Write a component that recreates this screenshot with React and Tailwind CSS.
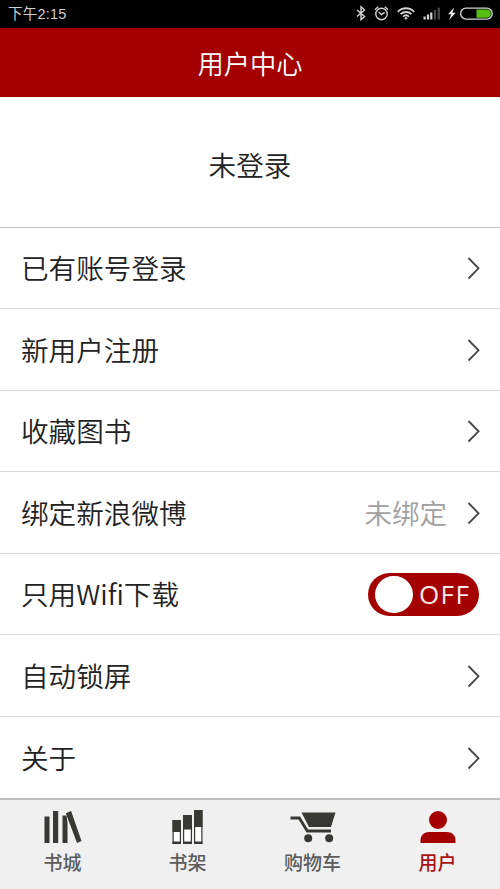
const RED = '#a40000'
const DARK = '#383834'

const rows = [
  { label: '已有账号登录' },
  { label: '新用户注册' },
  { label: '收藏图书' },
  { label: '绑定新浪微博', value: '未绑定' },
  { label: '只用Wifi下载', toggle: true },
  { label: '自动锁屏' },
  { label: '关于' },
]

function StatusIcons() {
  return (
    <svg width="145" height="28" viewBox="-5 0.5 145 28" fill="none" stroke="#d4d4d4" strokeWidth="1.4">
      {/* bluetooth */}
      <path d="M-3 10.5l7.500 6.500-3.500 3.200V7.300l3.500 3.200-7.500 6.500" />
      {/* alarm */}
      <circle cx="21.5" cy="14.5" r="5.7" />
      <path d="M15 10.2l3.2-3M28 10.2l-3.2-3M18.7 12.4l2.8 2.6 3.2-2.2" />
      {/* wifi */}
      <path d="M37.8 12.3a11.3 11.3 0 0 1 16.4 0M40.5 14.7a8 8 0 0 1 11 0M43 17.1a4.6 4.6 0 0 1 6 0" strokeWidth="1.8" />
      <circle cx="46" cy="18.8" r="1.3" fill="#d4d4d4" stroke="none" />
      {/* signal */}
      <path d="M64.6 17v3M68 15v5M71.3 13v7" strokeWidth="2.2" />
      <path d="M75 10.5V20M78.8 8.3V20" stroke="#4a4a4a" strokeWidth="2.2" />
      {/* charging */}
      <path d="M94.2 8l-6.2 6.800h3.200l-2.200 5.700 6.800-7.300h-3.300z" fill="#e5e5e5" stroke="none" />
      {/* battery */}
      <rect x="100.6" y="8.6" width="31.6" height="11" rx="5.5" />
      <path d="M116.5 10h10.2a4.1 4.1 0 0 1 0 8.2h-10.2z" fill="#54bf10" stroke="none" />
    </svg>
  )
}

function Chevron() {
  return (
    <svg className="mr-[19px]" width="14" height="24" viewBox="0 0 14 24" fill="none" stroke="#4a4a4a" strokeWidth="1.9">
      <path d="M1.500 2l10 10.300-10 10.200" />
    </svg>
  )
}

function Toggle() {
  return (
    <button className="mr-[21px] flex h-[43px] w-[111px] items-center rounded-full bg-[#a40000] pl-[7px]">
      <span className="h-[37px] w-[38px] rounded-full bg-white" />
      <span className="ml-[6px] font-['Open_Sans',sans-serif] text-[26px] leading-none font-medium tracking-[1.4px] text-[#fbeaea]">OFF</span>
    </button>
  )
}

function StoreIcon() {
  return (
    <svg width="40" height="36" viewBox="0 0 40 36" fill={DARK}>
      <path d="M1.5 7.5h5V34h-5zM10 2h5.2v32H10zM19.5 6.500h4l1 7V34h-5z" />
      <path d="M22.8 4.2l5.3-2.2 10.4 30-4.5 1.9z" />
    </svg>
  )
}

function ShelfIcon() {
  return (
    <svg width="34" height="36" viewBox="0 0 34 36">
      <g fill="#fff" stroke={DARK} strokeWidth="1.2">
        <path d="M2.1 11.5h7.3v22.9H2.1zM12.6 6.5h7.8v27.9h-7.8zM23.6 1.5h7.3v32.9h-7.3z" />
      </g>
      <path d="M1.5 11h8.5v12H1.5zM12 6h9v14.5h-9zM23 1h8.5v17H23zM1.5 32.5h8.5V35H1.5zM12 32.5h9V35h-9zM23 32.5h8.5V35H23z" fill={DARK} />
    </svg>
  )
}

function CartIcon() {
  return (
    <svg width="46" height="36" viewBox="0 0 46 36" fill={DARK}>
      <path d="M11.500 3.5h34L41 18H19z" />
      <path d="M.5 9h8.800l8 13H41" fill="none" stroke={DARK} strokeWidth="2.8" />
      <circle cx="18.2" cy="29.3" r="4" />
      <circle cx="39.2" cy="29.3" r="4" />
    </svg>
  )
}

function UserIcon() {
  return (
    <svg width="36" height="36" viewBox="0 0 36 36" fill={RED}>
      <circle cx="18" cy="11" r="9" />
      <path d="M.5 34v-2.500C.5 26 4 23 9.500 23h17c5.500 0 9 3 9 8.500V34z" />
    </svg>
  )
}

const tabs = [
  { label: '书城', Icon: StoreIcon },
  { label: '书架', Icon: ShelfIcon },
  { label: '购物车', Icon: CartIcon },
  { label: '用户', Icon: UserIcon, active: true },
]

export default function App() {
  return (
    <div className="flex h-[889px] w-[500px] flex-col overflow-hidden bg-white font-['Noto_Sans_CJK_SC',sans-serif] text-[#222]">
      <div className="flex h-[28px] shrink-0 items-center justify-between bg-black pl-2">
        <span className="pt-px font-['Liberation_Sans','Noto_Sans_CJK_SC',sans-serif] text-[14.5px] tracking-[0.2px] text-[#cfcfcf]">下午2:15</span>
        <StatusIcons />
      </div>
      <header className="flex h-[69px] shrink-0 items-center justify-center bg-[#a40000] pt-[1px] text-[26.3px] leading-none font-[350] text-white">
        <h1>用户中心</h1>
      </header>
      <div className="flex h-[131px] shrink-0 items-center justify-center border-b border-[#c4c4c4] pt-[5px] text-[27.6px] leading-none font-[350]">
        未登录
      </div>
      <ul className="flex flex-col">
        {rows.map((row) => (
          <li key={row.label} className="flex h-[81px] shrink-0 items-center border-b border-[#d8d8d8] pl-[21px] last:h-[81px] last:border-b-0 even:h-[82px]">
            <span className="flex-1 text-[27.6px] leading-none font-[350]">{row.label}</span>
            {row.value && <span className="mr-[20px] text-[27.5px] leading-none font-[350] text-[#a0a0a0]">{row.value}</span>}
            {row.toggle ? <Toggle /> : <Chevron />}
          </li>
        ))}
      </ul>
      <nav className="grid min-h-0 flex-1 grid-cols-4 border-t-2 border-[#bdbdbd] bg-[#f0f0f0]">
        {tabs.map(({ label, Icon, active }) => (
          <button key={label} className="flex flex-col items-center pt-[9px]">
            <Icon />
            <span className={active ? 'mt-[7px] text-[19px] leading-none font-medium text-[#a81414]' : 'mt-[7px] text-[19px] leading-none font-medium text-[#5c5c5c]'}>
              {label}
            </span>
          </button>
        ))}
      </nav>
    </div>
  )
}
